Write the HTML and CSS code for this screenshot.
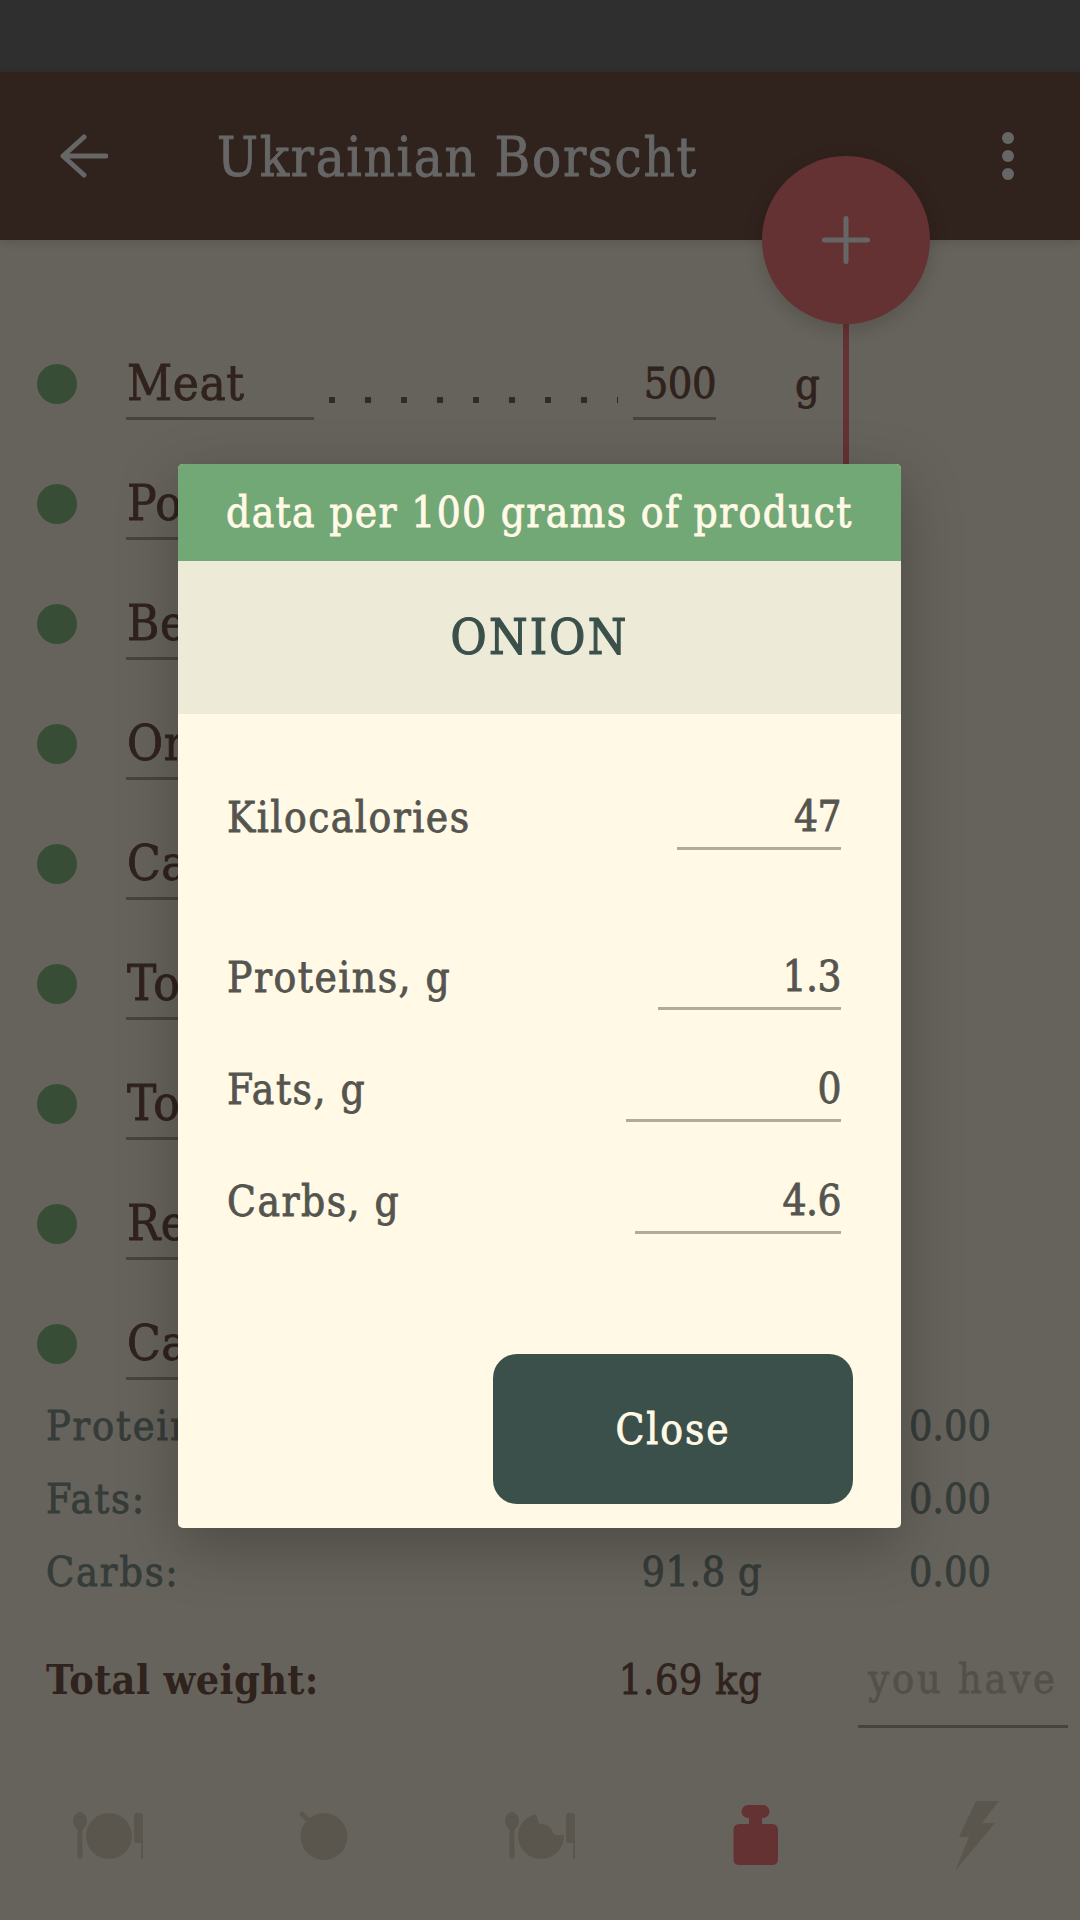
FILE: index.html
```html
<!DOCTYPE html>
<html lang="en">
  <head>
    <meta charset="UTF-8">
    <meta name="viewport" content="width=device-width, initial-scale=1.0">
    <title>Ukrainian Borscht</title>
    <link rel="stylesheet" href="styles.css">
  </head>
  <body>
    <div class="screen">
      <div class="status-bar"></div>
      <header class="app-bar">
        <svg class="back-icon" width="48" height="44" viewBox="0 0 48 44"><path d="M46 22H3M24 3L3 22L24 41"/></svg>
        <h1 class="title">Ukrainian Borscht</h1>
        <svg class="menu-icon" width="12" height="48" viewBox="0 0 12 48"><circle cx="6" cy="6" r="6"/><circle cx="6" cy="24" r="6"/><circle cx="6" cy="42" r="6"/></svg>
        <button class="add-button">
          <svg width="48" height="48" viewBox="0 0 48 48"><path d="M24 2.5V45.500M2.500 24H45.500"/></svg>
        </button>
        <div class="add-line"></div>
      </header>

      <div class="list">
        <div class="item">
          <span class="dot"></span>
          <span class="name">Meat</span>
          <span class="leader"></span>
          <span class="amount">500</span>
          <span class="unit">g</span>
        </div>
        <div class="item"><span class="dot"></span><span class="name">Potato</span></div>
        <div class="item"><span class="dot"></span><span class="name">Beet</span></div>
        <div class="item"><span class="dot"></span><span class="name">Onion</span></div>
        <div class="item"><span class="dot"></span><span class="name">Carrot</span></div>
        <div class="item"><span class="dot"></span><span class="name">Tomato</span></div>
        <div class="item"><span class="dot"></span><span class="name">Tomato</span></div>
        <div class="item"><span class="dot"></span><span class="name">Red</span></div>
        <div class="item"><span class="dot"></span><span class="name">Cabbage</span></div>
      </div>

      <div class="totals">
        <div class="total"><span class="total-name">Proteins:</span><span class="total-value"></span><span class="total-own">0.00</span></div>
        <div class="total"><span class="total-name">Fats:</span><span class="total-value"></span><span class="total-own">0.00</span></div>
        <div class="total"><span class="total-name">Carbs:</span><span class="total-value">91.8 g</span><span class="total-own">0.00</span></div>
      </div>
      <div class="total weight">
        <span class="total-name weight-name">Total weight:</span>
        <span class="total-value">1.69 kg</span>
        <span class="you-have">you have</span>
      </div>

      <nav class="tabs">
        <div class="tab">
          <svg width="72" height="72" viewBox="0 0 72 72">
            <ellipse cx="8" cy="21" rx="7" ry="9"/><rect x="5.500" y="24" width="5" height="35" rx="2.500"/>
            <circle cx="37" cy="36" r="23"/>
            <path d="M62 15.500Q62 13 65 13H68Q71 13 71 15.500V59H69V43H65Q62 43 62 40Z"/>
          </svg>
        </div>
        <div class="tab">
          <svg width="72" height="72" viewBox="0 0 72 72">
            <circle cx="36" cy="36.500" r="23.500"/><path class="handle" d="M14 14L21 21"/>
          </svg>
        </div>
        <div class="tab">
          <svg width="72" height="72" viewBox="0 0 72 72">
            <ellipse cx="8" cy="21" rx="7" ry="9"/><rect x="5.500" y="24" width="5" height="35" rx="2.500"/>
            <path d="M32 14C20 17 14 26 14 36A23 23 0 0 0 60 36C60 34 58 34.500 56 35H51Q49 34 48 30Q45 24 37 24Q34 24 34 20Z"/>
            <path d="M62 15.500Q62 13 65 13H68Q71 13 71 15.500V59H69V43H65Q62 43 62 40Z"/>
          </svg>
        </div>
        <div class="tab tab-active">
          <svg width="72" height="72" viewBox="0 0 72 72">
            <path d="M28 5H43A6.500 6.500 0 0 1 43 18H42V24H52Q58 24 58 30V59Q58 65 52 65H19.500Q13.500 65 13.500 59V30Q13.500 24 19.500 24H29V18H28A6.500 6.500 0 0 1 28 5Z"/>
          </svg>
        </div>
        <div class="tab">
          <svg width="72" height="72" viewBox="0 0 72 72"><path d="M40 1H63L46 23H59L19 71L33 37H23Z"/></svg>
        </div>
      </nav>

      <div class="overlay">
        <div class="dialog">
          <div class="dialog-hint">data per 100 grams of product</div>
          <div class="dialog-title">ONION</div>
          <div class="dialog-body">
            <div class="field field-kcal"><span class="label">Kilocalories</span><span class="input">47</span></div>
            <div class="field field-proteins"><span class="label">Proteins, g</span><span class="input">1.3</span></div>
            <div class="field field-fats"><span class="label">Fats, g</span><span class="input">0</span></div>
            <div class="field field-carbs"><span class="label">Carbs, g</span><span class="input">4.6</span></div>
            <button class="close-button">Close</button>
          </div>
        </div>
      </div>
    </div>
  </body>
</html>
```
FILE: styles.css
```css
* {
    box-sizing: border-box;
}

body {
    margin: 0;
    font-family: "DejaVu Serif Condensed", "DejaVu Serif", serif;
    font-stretch: condensed;
    -webkit-text-stroke-width: 0.8px;
}

.screen {
    position: relative;
    width: 1080px;
    height: 1920px;
    overflow: hidden;
    display: flex;
    flex-direction: column;
    background-color: #fff8e6;
}

.status-bar {
    height: 72px;
    background-color: #757575;
}

.app-bar {
    position: relative;
    height: 168px;
    display: flex;
    align-items: center;
    padding: 0 66px 0 60px;
    background-color: #795548;
    box-shadow: 0 3px 10px rgba(0, 0, 0, 0.12);
}

.back-icon,
.add-button svg {
    fill: none;
    stroke: white;
    stroke-width: 5;
    stroke-linecap: round;
    stroke-linejoin: round;
}

.menu-icon {
    fill: white;
}

.title {
    flex: 1;
    margin: 2px 0 0 109px;
    font-size: 54px;
    font-weight: normal;
    letter-spacing: 1.7px;
    color: white;
}

.add-button {
    position: absolute;
    left: 762px;
    top: 84px;
    z-index: 2;
    width: 168px;
    height: 168px;
    display: flex;
    align-items: center;
    justify-content: center;
    border: none;
    border-radius: 50%;
    background-color: #fa7d7d;
    box-shadow: 0 6px 20px rgba(0, 0, 0, 0.16);
}

.add-line {
    position: absolute;
    left: 843px;
    top: 240px;
    width: 6px;
    height: 400px;
    background-color: #fa7d7d;
}

.list {
    height: 1149px;
    padding-top: 84px;
    overflow: hidden;
    flex-shrink: 0;
}

.item {
    height: 120px;
    padding: 0 37px;
    display: flex;
    align-items: center;
    color: #795548;
}

.dot {
    width: 40px;
    height: 40px;
    margin-right: 49px;
    border-radius: 50%;
    background-color: #8cc085;
}

.name {
    width: 188px;
    height: 72px;
    line-height: 71px;
    padding-left: 1px;
    border-bottom: 3px solid #b2aa9b;
    font-size: 49px;
    letter-spacing: 0.6px;
}

.leader {
    width: 289px;
    height: 6px;
    margin: 32px 15px 0;
    background: repeating-linear-gradient(to right, #786f5a 0, #786f5a 6px, transparent 6px, transparent 36px);
}

.amount {
    width: 83px;
    height: 72px;
    line-height: 70px;
    border-bottom: 3px solid #b2aa9b;
    font-size: 43px;
    letter-spacing: -0.5px;
    text-align: right;
}

.unit {
    margin-left: 79px;
    font-size: 43px;
}

.total {
    height: 73px;
    display: flex;
    align-items: center;
    padding-left: 46px;
    font-size: 41px;
    color: #879690;
}

.total-name {
    width: 315px;
    letter-spacing: 1.8px;
}

.total-value {
    width: 401px;
    letter-spacing: 0.5px;
    text-align: right;
}

.total-own {
    width: 229px;
    text-align: right;
}

.weight {
    height: 96px;
    margin-top: 24px;
    color: #795548;
}

.weight-name {
    font-weight: bold;
    letter-spacing: 0.4px;
    -webkit-text-stroke-width: 0;
}

.you-have {
    width: 210px;
    height: 96px;
    margin-left: 96px;
    line-height: 95px;
    border-bottom: 3px solid #b2aa9b;
    letter-spacing: 2.8px;
    text-align: center;
    color: #d0c9ba;
}

.tabs {
    height: 168px;
    margin-top: 24px;
    display: flex;
}

.tab {
    flex: 1;
    display: flex;
    align-items: center;
    justify-content: center;
    fill: #e1d7c1;
}

.tab-active {
    fill: #fa7d7d;
}

.handle {
    stroke: #e1d7c1;
    stroke-width: 5;
    stroke-linecap: round;
}

.overlay {
    position: absolute;
    top: 0;
    left: 0;
    z-index: 3;
    width: 100%;
    height: 100%;
    padding: 464px 179px 0 178px;
    background-color: rgba(0, 0, 0, 0.6);
}

.dialog {
    height: 1064px;
    border-radius: 5px;
    overflow: hidden;
    background-color: #fff9e6;
    box-shadow: 0 18px 60px rgba(0, 0, 0, 0.25);
}

.dialog-hint {
    height: 97px;
    line-height: 98px;
    text-align: center;
    font-size: 42px;
    letter-spacing: 1.35px;
    color: #fff9e6;
    background-color: #72a776;
}

.dialog-title {
    height: 153px;
    line-height: 153px;
    text-align: center;
    font-size: 49px;
    letter-spacing: 2.2px;
    -webkit-text-stroke-width: 1.2px;
    color: #3b504b;
    background-color: #edead8;
}

.dialog-body {
    padding: 70px 48px 0 49px;
    display: flex;
    flex-direction: column;
}

.field {
    height: 66px;
    margin-bottom: 46px;
    padding-right: 12px;
    display: flex;
    justify-content: space-between;
    line-height: 65px;
    font-size: 42px;
    color: #555550;
}

.label {
    line-height: 67px;
    letter-spacing: 1.5px;
}

.input {
    height: 66px;
    border-bottom: 3px solid #b0ab9b;
    letter-spacing: -0.5px;
    text-align: right;
}

.field-kcal {
    margin-bottom: 94px;
}

.field-kcal .input {
    width: 164px;
}

.field-proteins .input {
    width: 183px;
}

.field-fats .input {
    width: 215px;
}

.field-carbs .input {
    width: 206px;
}

.close-button {
    width: 360px;
    height: 150px;
    margin-top: 74px;
    align-self: flex-end;
    border: none;
    border-radius: 24px;
    font-family: inherit;
    font-stretch: inherit;
    font-size: 42px;
    letter-spacing: 1.9px;
    color: #fff9e6;
    background-color: #3b504b;
}
```
